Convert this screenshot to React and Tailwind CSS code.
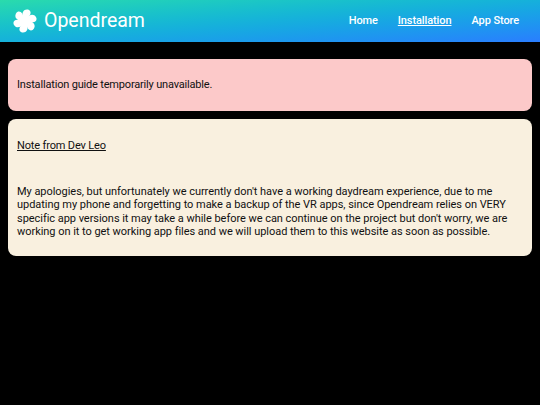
const links = [
  { label: 'Home' },
  { label: 'Installation', active: true },
  { label: 'App Store' },
];

function Logo() {
  // pinwheel made of six rotated petals
  return (
    <svg className="w-[24px] h-[24px] blur-[0.5px]" viewBox="0 0 24 24" fill="white">
      <circle cx="12" cy="12" r="5.5" />
      {[0, 60, 120, 180, 240, 300].map((a) => (
        <path key={a} d="M10 10 C8.5 5 9.5 0.5 14 0.5 C17 0.5 18.5 3 17 6 L13 11 Z" transform={`rotate(${a} 12 12)`} />
      ))}
    </svg>
  );
}

export default function App() {
  return (
    <div className="min-h-[405px] bg-black font-['Roboto',sans-serif] text-[#111]">
      <header className="h-[42px] pl-[13px] pr-[21px] flex items-center justify-between bg-gradient-to-br from-[#2adbac] to-[#2a7dff]">
        <div className="flex items-center gap-[7px]">
          <Logo />
          <span className="text-[19.5px] leading-none text-white">Opendream</span>
        </div>
        <nav className="flex items-center gap-[20px]">
          {links.map((link) => (
            <a
              key={link.label}
              href="#"
              className={`text-[11px] tracking-[-0.1px] font-medium text-white ${link.active ? 'underline' : ''}`}
            >
              {link.label}
            </a>
          ))}
        </nav>
      </header>

      <main className="px-[8px] pt-[17px] flex flex-col gap-[8px]">
        <section className="h-[52px] px-[9px] pt-px flex items-center rounded-[8px] bg-[#fcc9c9] text-[11px] tracking-[-0.18px]">
          <p>Installation guide temporarily unavailable.</p>
        </section>
        <section className="h-[137px] px-[9px] pt-[20px] rounded-[8px] bg-[#f9f0df] text-[11px] leading-[13.5px]">
          <p className="underline tracking-[-0.15px]">Note from Dev Leo</p>
          <p className="mt-[32px] tracking-[-0.04px]">
            My apologies, but unfortunately we currently don't have a working daydream experience, due to me updating my phone and forgetting to make a backup of the VR apps, since Opendream relies on VERY specific app versions it may take a while before we can continue on the project but don't worry, we are working on it to get working app files and we will upload them to this website as soon as possible.
          </p>
        </section>
      </main>
    </div>
  );
}
